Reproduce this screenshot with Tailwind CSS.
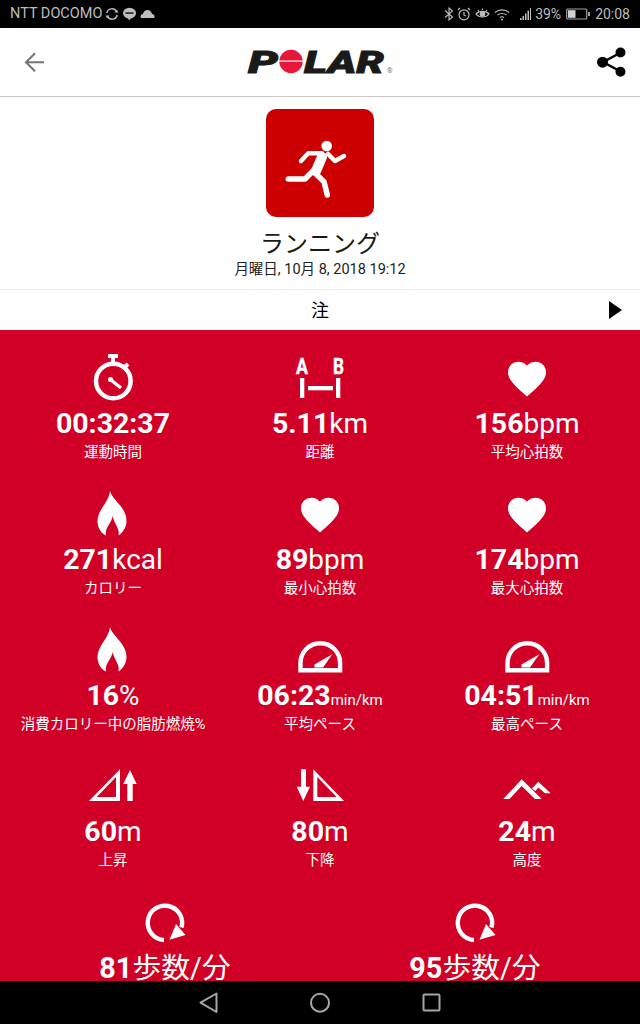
<!DOCTYPE html>
<html lang="ja">
<head>
    <meta charset="UTF-8">
    <meta name="viewport" content="width=device-width, initial-scale=1.0">
    <title>ランニング - Polar</title>
    <script src="https://cdn.jsdelivr.net/npm/@tailwindcss/browser@4"></script>
</head>
<body class="font-['Roboto','Noto_Sans_CJK_JP',sans-serif]">
    <!-- shared icons -->
    <svg class="hidden">
        <symbol id="heart" viewBox="0 0 50 50"><path transform="translate(2.200 4) scale(1.9)" fill="#fff" d="M12 21.35l-1.45-1.32C5.4 15.36 2 12.28 2 8.5 2 5.42 4.42 3 7.5 3c1.74 0 3.41.81 4.5 2.09C13.09 3.81 14.76 3 16.5 3 19.58 3 22 5.42 22 8.5c0 3.78-3.4 6.86-8.55 11.54L12 21.35z"/></symbol>
        <symbol id="flame" viewBox="0 0 50 50"><path fill="#fff" d="M22 3C24 12 38.500 19 38.500 33C38.500 40 34 45 30.500 47.500C32 41 26.500 36 24.500 28C24 35 16.500 39 18 47.500C13 45 9.500 40 9.500 33C9.500 22 21 14 22 3Z"/></symbol>
        <symbol id="gauge" viewBox="0 0 50 50"><path fill="none" stroke="#fff" stroke-width="4.400" d="M5.500 46.200V39A19.800 19.800 0 0 1 45.100 39V46.200Z"/><path fill="#fff" d="M19.500 40.500L37.300 30.300L28 43.500H19.500Z"/></symbol>
        <symbol id="cadence" viewBox="0 0 50 50"><path fill="none" stroke="#fff" stroke-width="4.400" d="M24 44A17.200 17.200 0 1 1 41.500 31.500"/><path fill="#fff" d="M29.500 43.800L45.500 39L36 28Z"/></symbol>
    </svg>

    <div class="flex flex-col h-[1024px] w-[640px] overflow-hidden bg-white">
        <!-- status bar -->
        <div class="h-[28px] shrink-0 bg-black flex items-center justify-between pl-[10px] pr-[10px] text-[14px] text-[#bdbdbd]">
            <div class="flex items-center">
                <span class="text-[14.500px]">NTT DOCOMO</span>
                <svg class="ml-[3px]" width="14" height="14" viewBox="0 0 14 14" fill="none" stroke="#bdbdbd" stroke-width="1.500"><path d="M1.800 6A5.200 5.200 0 0 1 11.500 4.600M12.200 8A5.200 5.200 0 0 1 2.500 9.400"/><path fill="#bdbdbd" stroke="none" d="M9.500 5.500H13.500L12 2.800ZM4.500 8.500H.5L2 11.200Z"/></svg>
                <svg class="ml-[3px]" width="15" height="14" viewBox="0 0 15 14"><ellipse cx="7.500" cy="6.200" rx="6.500" ry="5.500" fill="#bdbdbd"/><path d="M6 11H9L7 13.500Z" fill="#bdbdbd"/><rect x="3.500" y="5.300" width="8" height="1.600" fill="#222"/></svg>
                <svg class="ml-[3px]" width="15" height="10" viewBox="0 0 15 10"><path fill="#bdbdbd" d="M1 9C-.2 7 .8 5 3 5C3.500 2.500 5.500 1 7.500 1C10 1 11.500 3 12 5C14 5 15.300 7 14.200 9Z"/></svg>
            </div>
            <div class="flex items-center">
                <svg width="10" height="14" viewBox="0 0 10 14" fill="none" stroke="#bdbdbd" stroke-width="1.100"><path d="M1 3.500L8.500 10L5 13V1L8.500 4L1 10.500"/></svg>
                <svg class="ml-[3px]" width="14" height="14" viewBox="0 0 14 14" fill="none" stroke="#bdbdbd" stroke-width="1.200"><circle cx="7" cy="7.800" r="5"/><path d="M7 5V8L9 9M1 3L3 1M13 3L11 1"/></svg>
                <svg class="ml-[4px]" width="15" height="14" viewBox="0 0 15 14" fill="none" stroke="#bdbdbd" stroke-width="1.200"><path d="M1 7C4 3.500 11 3.500 14 7C11 11 4 11 1 7Z"/><circle cx="7.500" cy="7" r="2.200" fill="#bdbdbd"/><path d="M3 3L4 4.500M7.500 1.500V3M12 3L11 4.500"/></svg>
                <svg class="ml-[4px]" width="16" height="13" viewBox="0 0 16 13" fill="none" stroke="#bdbdbd" stroke-width="1.100"><path d="M1 4.500C5 1 11 1 15 4.500M3.500 7C6 5 10 5 12.500 7M6 9.500C7 8.700 9 8.700 10 9.500"/><circle cx="8" cy="11.500" r="1" fill="#bdbdbd" stroke="none"/></svg>
                <svg class="ml-[10px]" width="12" height="14" viewBox="0 0 12 14" fill="#bdbdbd"><rect x="0" y="11" width="1.500" height="2"/><rect x="2.500" y="9" width="1.500" height="4"/><rect x="5" y="6.500" width="1.500" height="6.500"/><rect x="7.500" y="3.500" width="1.500" height="9.500"/><rect x="10" y="1" width="1" height="12"/></svg>
                <span class="ml-[3px]">39%</span>
                <svg class="ml-[5px]" width="24" height="12" viewBox="0 0 24 12"><rect x=".7" y="1" width="20" height="10" rx="1" fill="none" stroke="#9e9e9e" stroke-width="1.200"/><rect x="2" y="2.200" width="7.500" height="7.600" fill="#d0d0d0"/><rect x="22" y="4" width="2" height="4" fill="#9e9e9e"/></svg>
                <span class="ml-[5px]">20:08</span>
            </div>
        </div>

        <!-- header -->
        <div class="h-[69px] shrink-0 border-b border-[#c8c8c8] relative flex items-center justify-between">
            <svg class="ml-[24px]" width="22" height="22" viewBox="0 0 22 22" fill="none" stroke="#757575" stroke-width="2"><path d="M1.200 11.300H20M11 2.300L2 11.300L11 20.300"/></svg>
            <svg class="absolute left-[240px] top-[16px]" width="160" height="36" viewBox="0 0 160 36">
                <text x="8" y="29" font-size="32" font-weight="900" font-style="italic" textLength="30" lengthAdjust="spacingAndGlyphs" fill="#1a1a1a" stroke="#1a1a1a" stroke-width=".9">P</text>
                <circle cx="51" cy="17.500" r="11.700" fill="#e8173a"/>
                <rect x="38" y="16.500" width="26" height="1.200" fill="#fff"/>
                <text x="64" y="29" font-size="32" font-weight="900" font-style="italic" textLength="80" lengthAdjust="spacingAndGlyphs" fill="#1a1a1a" stroke="#1a1a1a" stroke-width=".9">LAR</text>
                <text x="147" y="29" font-size="7" fill="#777">®</text>
            </svg>
            <svg class="mr-[12px]" width="32" height="32" viewBox="0 0 32 32" fill="#000" stroke="#000" stroke-width="2.400"><path d="M25 6.500L7 16L25 25.800" fill="none"/><circle cx="24.500" cy="6.500" r="3.800"/><circle cx="6.500" cy="16.200" r="4.300"/><circle cx="24.500" cy="25.800" r="3.800"/></svg>
        </div>

        <!-- activity -->
        <div class="h-[193px] shrink-0 flex flex-col items-center border-b border-[#eeeeee]">
            <div class="mt-[12px] w-[108px] h-[108px] rounded-[10px] bg-[#cc0000]">
                <svg width="108" height="108" viewBox="0 0 108 108" fill="none" stroke="#fff" stroke-linecap="round" stroke-linejoin="round">
                    <circle cx="60.700" cy="37" r="5.300" fill="#fff" stroke="none"/>
                    <path stroke-width="4.500" d="M35 52L42.300 44.300H56M62 45L69 52L78 47"/>
                    <path stroke-width="10" d="M56 48L50 62"/>
                    <path stroke-width="5.500" d="M47 62L39 70H22.300M49 64L58 72.700L61.300 86"/>
                </svg>
            </div>
            <div class="mt-[10px] text-[24px] leading-[34px] text-[#1a1a1a]">ランニング</div>
            <div class="text-[14.500px] leading-[18px] text-[#222]">月曜日, 10月 8, 2018 19:12</div>
        </div>

        <!-- notes -->
        <div class="h-[40px] shrink-0 relative flex items-center justify-center text-[18px] text-black">
            <span>注</span>
            <svg class="absolute right-[18px] top-[11px]" width="13" height="18" viewBox="0 0 13 18"><path d="M0 0L13 9L0 18Z" fill="#000"/></svg>
        </div>

        <!-- stats -->
        <div class="flex-1 min-h-0 overflow-hidden bg-[#d10027] text-white">
            <div class="grid grid-cols-3 px-[9.5px]">
                <div class="h-[136px] pt-[22px] flex flex-col items-center">
                    <svg width="50" height="50" viewBox="0 0 50 50" fill="none" stroke="#fff"><circle cx="25.300" cy="29" r="17.300" stroke-width="4.500"/><path stroke-width="4" d="M20 4H30M25 4V11M37 15L40 12"/><path stroke-width="3.500" d="M23 28L33 36"/><circle cx="22.500" cy="27.500" r="2.500" fill="#fff" stroke="none"/></svg>
                    <div class="mt-[5px] text-[28.500px] leading-[34px] font-bold whitespace-nowrap">00:32:37</div>
                    <div class="mt-[2px] text-[14.500px] leading-[20px] whitespace-nowrap">運動時間</div>
                </div>
                <div class="h-[136px] pt-[22px] flex flex-col items-center">
                    <svg class="overflow-visible" width="50" height="50" viewBox="0 0 50 50" fill="#fff">
                        <text x="1" y="22" font-size="22" font-weight="700" textLength="12" lengthAdjust="spacingAndGlyphs" stroke="#fff" stroke-width=".4">A</text>
                        <text x="38" y="22" font-size="22" font-weight="700" textLength="11" lengthAdjust="spacingAndGlyphs" stroke="#fff" stroke-width=".4">B</text>
                        <rect x="5" y="26" width="4.300" height="20"/><rect x="41" y="26" width="4.300" height="20"/><rect x="13" y="34" width="25" height="4.300"/>
                    </svg>
                    <div class="mt-[5px] text-[28.500px] leading-[34px] font-bold whitespace-nowrap">5.11<span class="font-normal text-[28px] leading-none">km</span></div>
                    <div class="mt-[2px] text-[14.500px] leading-[20px] whitespace-nowrap">距離</div>
                </div>
                <div class="h-[136px] pt-[22px] flex flex-col items-center">
                    <svg width="50" height="50"><use href="#heart"/></svg>
                    <div class="mt-[5px] text-[28.500px] leading-[34px] font-bold whitespace-nowrap">156<span class="font-normal text-[28px] leading-none">bpm</span></div>
                    <div class="mt-[2px] text-[14.500px] leading-[20px] whitespace-nowrap">平均心拍数</div>
                </div>

                <div class="h-[136px] pt-[22px] flex flex-col items-center">
                    <svg width="50" height="50"><use href="#flame"/></svg>
                    <div class="mt-[5px] text-[28.500px] leading-[34px] font-bold whitespace-nowrap">271<span class="font-normal text-[28px] leading-none">kcal</span></div>
                    <div class="mt-[2px] text-[14.500px] leading-[20px] whitespace-nowrap">カロリー</div>
                </div>
                <div class="h-[136px] pt-[22px] flex flex-col items-center">
                    <svg width="50" height="50"><use href="#heart"/></svg>
                    <div class="mt-[5px] text-[28.500px] leading-[34px] font-bold whitespace-nowrap">89<span class="font-normal text-[28px] leading-none">bpm</span></div>
                    <div class="mt-[2px] text-[14.500px] leading-[20px] whitespace-nowrap">最小心拍数</div>
                </div>
                <div class="h-[136px] pt-[22px] flex flex-col items-center">
                    <svg width="50" height="50"><use href="#heart"/></svg>
                    <div class="mt-[5px] text-[28.500px] leading-[34px] font-bold whitespace-nowrap">174<span class="font-normal text-[28px] leading-none">bpm</span></div>
                    <div class="mt-[2px] text-[14.500px] leading-[20px] whitespace-nowrap">最大心拍数</div>
                </div>

                <div class="h-[136px] pt-[22px] flex flex-col items-center">
                    <svg width="50" height="50"><use href="#flame"/></svg>
                    <div class="mt-[5px] text-[28.500px] leading-[34px] font-bold whitespace-nowrap">16<span class="font-normal text-[28px] leading-none">%</span></div>
                    <div class="mt-[2px] text-[14.500px] leading-[20px] whitespace-nowrap">消費カロリー中の脂肪燃焼%</div>
                </div>
                <div class="h-[136px] pt-[22px] flex flex-col items-center">
                    <svg width="50" height="50"><use href="#gauge"/></svg>
                    <div class="mt-[5px] text-[28.500px] leading-[34px] font-bold whitespace-nowrap">06:23<span class="font-normal text-[15px] leading-none">min/km</span></div>
                    <div class="mt-[2px] text-[14.500px] leading-[20px] whitespace-nowrap">平均ペース</div>
                </div>
                <div class="h-[136px] pt-[22px] flex flex-col items-center">
                    <svg width="50" height="50"><use href="#gauge"/></svg>
                    <div class="mt-[5px] text-[28.500px] leading-[34px] font-bold whitespace-nowrap">04:51<span class="font-normal text-[15px] leading-none">min/km</span></div>
                    <div class="mt-[2px] text-[14.500px] leading-[20px] whitespace-nowrap">最高ペース</div>
                </div>

                <div class="h-[136px] pt-[22px] flex flex-col items-center">
                    <svg width="50" height="50" viewBox="0 0 50 50" fill="#fff"><path fill-rule="evenodd" d="M1 41L32 9.300V41ZM8.700 37H28V17Z"/><path d="M42 10L48.700 24H44.700V41H39.300V24H35.300Z"/></svg>
                    <div class="mt-[5px] text-[28.500px] leading-[34px] font-bold whitespace-nowrap">60<span class="font-normal text-[28px] leading-none">m</span></div>
                    <div class="mt-[2px] text-[14.500px] leading-[20px] whitespace-nowrap">上昇</div>
                </div>
                <div class="h-[136px] pt-[22px] flex flex-col items-center">
                    <svg width="50" height="50" viewBox="0 0 50 50" fill="#fff"><path fill-rule="evenodd" d="M18.300 9.300V41H49ZM22.300 17V37H41.700Z"/><path d="M8.300 41L1.700 26.700H6V9.300H11V26.700H15Z"/></svg>
                    <div class="mt-[5px] text-[28.500px] leading-[34px] font-bold whitespace-nowrap">80<span class="font-normal text-[28px] leading-none">m</span></div>
                    <div class="mt-[2px] text-[14.500px] leading-[20px] whitespace-nowrap">下降</div>
                </div>
                <div class="h-[136px] pt-[22px] flex flex-col items-center">
                    <svg width="50" height="50" viewBox="0 0 50 50" fill="#fff"><path d="M1.300 39L19.700 19.300L39.700 39H33L19.700 26L7.500 39Z"/><path d="M30 28.500L36.300 21.700L48.700 33.300H43L36.300 27.500L33.500 31Z"/></svg>
                    <div class="mt-[5px] text-[28.500px] leading-[34px] font-bold whitespace-nowrap">24<span class="font-normal text-[28px] leading-none">m</span></div>
                    <div class="mt-[2px] text-[14.500px] leading-[20px] whitespace-nowrap">高度</div>
                </div>
            </div>
            <div class="grid grid-cols-2 px-[10px]">
                <div class="h-[136px] pt-[22px] flex flex-col items-center">
                    <svg width="50" height="50"><use href="#cadence"/></svg>
                    <div class="mt-[5px] text-[28.800px] leading-[34px] font-bold whitespace-nowrap">81<span class="font-normal leading-none">歩数/分</span></div>
                </div>
                <div class="h-[136px] pt-[22px] flex flex-col items-center">
                    <svg width="50" height="50"><use href="#cadence"/></svg>
                    <div class="mt-[5px] text-[28.800px] leading-[34px] font-bold whitespace-nowrap">95<span class="font-normal leading-none">歩数/分</span></div>
                </div>
            </div>
        </div>

        <!-- nav bar -->
        <div class="h-[43px] shrink-0 bg-black flex items-center justify-center">
            <svg width="640" height="43" viewBox="0 0 640 43" fill="none" stroke="#a6a6a6" stroke-width="2" stroke-linejoin="round"><path d="M200.500 21.700L216.500 12.500V31Z"/><circle cx="320" cy="21.700" r="9"/><rect x="423.500" y="13.500" width="16" height="16" rx="1"/></svg>
        </div>
    </div>
</body>
</html>
